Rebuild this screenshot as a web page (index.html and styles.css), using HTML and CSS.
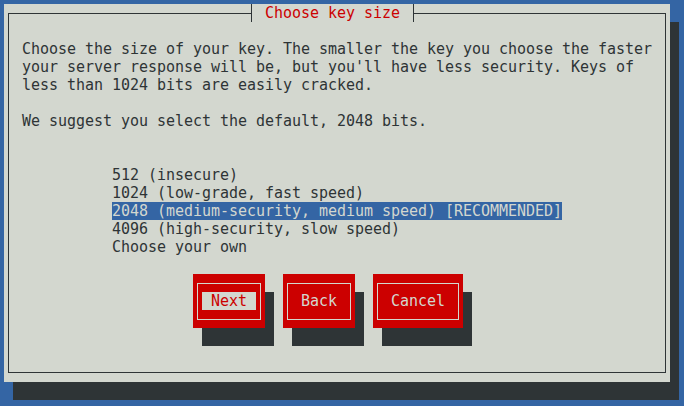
FILE: index.html
```
<!DOCTYPE html>
<html lang="en">
  <head>
    <meta charset="UTF-8" />
    <title>Choose key size</title>
    <link rel="stylesheet" href="styles.css">
  </head>
  <body>
    <div class="screen">
      <div class="dialog">
        <fieldset class="frame">
          <legend class="title">Choose key size</legend>
          <p class="intro">Choose the size of your key. The smaller the key you choose the faster
your server response will be, but you'll have less security. Keys of
less than 1024 bits are easily cracked.</p>
          <p class="suggest">We suggest you select the default, 2048 bits.</p>
          <ul class="menu">
            <li>512 (insecure)</li>
            <li>1024 (low-grade, fast speed)</li>
            <li><span class="selected">2048 (medium-security, medium speed) [RECOMMENDED]</span></li>
            <li>4096 (high-security, slow speed)</li>
            <li>Choose your own</li>
          </ul>
          <div class="buttons">
            <button class="btn btn-focus"><span class="btn-box"><span class="btn-label">Next</span></span></button>
            <button class="btn"><span class="btn-box"><span class="btn-label">Back</span></span></button>
            <button class="btn"><span class="btn-box"><span class="btn-label">Cancel</span></span></button>
          </div>
        </fieldset>
      </div>
    </div>
  </body>
</html>
```

FILE: styles.css
```
*,
body {
  margin: 0;
  padding: 0;
}
body {
  background: #3465a4;
  width: 684px;
  height: 406px;
  overflow: hidden;
  font-family: "DejaVu Sans Mono", "Liberation Mono", monospace;
  font-size: 15px;
  letter-spacing: -0.03px;
  line-height: 18px;
  color: #2e3436;
}
.screen {
  padding: 4px;
}
.dialog {
  width: 666px;
  height: 378px;
  background: #d3d7cf;
  box-shadow: 9px 18px 0 #2e3436;
}
.frame {
  box-sizing: border-box;
  height: 369px;
  margin: 0 4px 9px;
  padding: 18px 0 0 13px;
  border: 1px solid #2e3436;
  min-width: 0;
}
.title {
  margin-left: 229px;
  padding: 0 13px;
  height: 18px;
  line-height: 18px;
  border-left: 1px solid #2e3436;
  border-right: 1px solid #2e3436;
  color: #cc0000;
}
.intro,
.suggest {
  white-space: pre;
}
.suggest {
  margin-top: 18px;
}
.menu {
  list-style: none;
  margin-top: 36px;
  padding-left: 90px;
}
.selected {
  background: #3465a4;
  color: #d3d7cf;
}
.buttons {
  display: flex;
  gap: 18px;
  margin-top: 18px;
  padding-left: 171px;
}
.btn {
  display: flex;
  width: 72px;
  height: 54px;
  padding: 9px 4px 8px;
  background: #cc0000;
  border: none;
  box-shadow: 9px 18px 0 #2e3436;
  font: inherit;
  color: #d3d7cf;
}
.btn:last-child {
  width: 90px;
}
.btn-box {
  flex: 1;
  display: flex;
  justify-content: center;
  padding: 8px 0 9px;
  border: 1px solid #d3d7cf;
}
.btn-label {
  padding: 0 9px;
  height: 18px;
  line-height: 18px;
}
.btn-focus .btn-label {
  background: #d3d7cf;
  color: #cc0000;
}
```
